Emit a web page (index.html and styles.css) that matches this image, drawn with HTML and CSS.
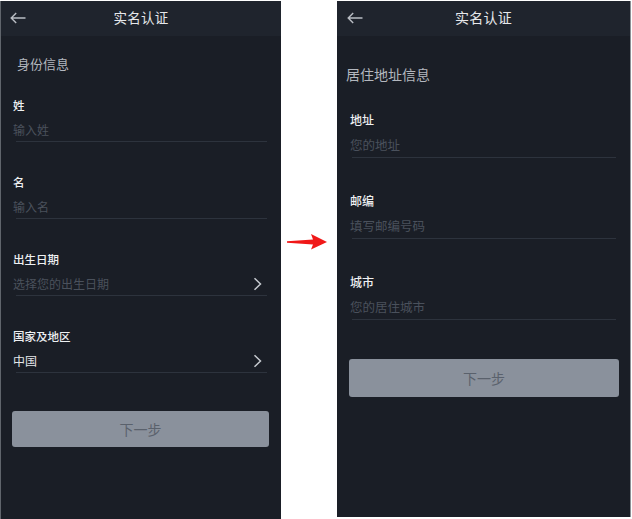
FILE: index.html
```html
<!DOCTYPE html>
<html lang="zh-CN">
<head>
<meta charset="utf-8">
<title>实名认证</title>
<link rel="stylesheet" href="styles.css">
</head>
<body>
<div class="stage">
  <section class="phone phone-left">
    <header class="topbar">
      <span class="back">
        <svg width="16" height="12" viewBox="0 0 16 12"><path d="M15.5 6H1.2M6.2 1L1.2 6l5 5" fill="none" stroke="#b9bdc4" stroke-width="1.4"/></svg>
      </span>
      <span class="title">实名认证</span>
      <span></span>
    </header>
    <h2 class="section">身份信息</h2>
    <div class="fields">
      <div class="field">
        <div class="label">姓</div>
        <div class="value placeholder">输入姓</div>
        <div class="rule"></div>
      </div>
      <div class="field">
        <div class="label">名</div>
        <div class="value placeholder">输入名</div>
        <div class="rule"></div>
      </div>
      <div class="field">
        <div class="label">出生日期</div>
        <div class="value placeholder"><span>选择您的出生日期</span>
          <svg class="chev" width="9" height="14" viewBox="0 0 9 14"><path d="M1.5 1.2l6 5.8-6 5.8" fill="none" stroke="#c6cad0" stroke-width="1.5"/></svg>
        </div>
        <div class="rule"></div>
      </div>
      <div class="field">
        <div class="label">国家及地区</div>
        <div class="value filled"><span>中国</span>
          <svg class="chev" width="9" height="14" viewBox="0 0 9 14"><path d="M1.5 1.2l6 5.8-6 5.8" fill="none" stroke="#c6cad0" stroke-width="1.5"/></svg>
        </div>
        <div class="rule"></div>
      </div>
    </div>
    <button class="next">下一步</button>
  </section>

  <div class="flow">
    <svg width="40" height="20" viewBox="0 0 40 20"><polygon points="0,9.3 26,7.6 24,2 40,10 24,17.5 26,12.6 0,10.7" fill="#f01818"/></svg>
  </div>

  <section class="phone phone-right">
    <header class="topbar">
      <span class="back">
        <svg width="16" height="12" viewBox="0 0 16 12"><path d="M15.5 6H1.2M6.2 1L1.2 6l5 5" fill="none" stroke="#b9bdc4" stroke-width="1.4"/></svg>
      </span>
      <span class="title">实名认证</span>
      <span></span>
    </header>
    <h2 class="section">居住地址信息</h2>
    <div class="fields">
      <div class="field">
        <div class="label">地址</div>
        <div class="value placeholder">您的地址</div>
        <div class="rule"></div>
      </div>
      <div class="field">
        <div class="label">邮编</div>
        <div class="value placeholder">填写邮编号码</div>
        <div class="rule"></div>
      </div>
      <div class="field">
        <div class="label">城市</div>
        <div class="value placeholder">您的居住城市</div>
        <div class="rule"></div>
      </div>
    </div>
    <button class="next">下一步</button>
  </section>
</div>
</body>
</html>
```

FILE: styles.css
```css
* { box-sizing: border-box; }

html, body {
  margin: 0;
  padding: 0;
  background: #ffffff;
}

body {
  font-family: "Noto Sans CJK SC", "Noto Sans", sans-serif;
  width: 632px;
  height: 519px;
  overflow: hidden;
}

.stage {
  display: flex;
  align-items: flex-start;
  padding-top: 1px;
}

.phone {
  background: #1a1e26;
  display: flex;
  flex-direction: column;
}

.phone-left {
  width: 281px;
  height: 518px;
  border-left: 1px solid #60656c;
}

.phone-right {
  width: 294px;
  height: 516px;
  border-right: 1px solid #8c9096;
}

.topbar {
  height: 35px;
  padding-bottom: 3px;
  background: #1f242d;
  display: grid;
  grid-template-columns: 1fr auto 1fr;
  align-items: center;
}

.back {
  display: flex;
  align-items: center;
  padding-left: 9px;
  padding-top: 1px;
}

.phone-right .back { padding-left: 10px; }

.title {
  color: #e6e8eb;
  font-size: 13.5px;
  line-height: 18px;
  letter-spacing: 0.3px;
}

.phone-right .title { font-size: 14px; }

.section {
  margin: 19px 0 0 16px;
  font-weight: normal;
  font-size: 13px;
  line-height: 18px;
  color: #b3b7be;
}

.phone-right .section {
  margin: 28px 0 0 9px;
  font-size: 14px;
  line-height: 20px;
}

.fields {
  display: flex;
  flex-direction: column;
  gap: 32px;
  margin: 24px 14px 0 12px;
}

.phone-right .fields {
  gap: 35px;
  margin: 28px 14px 0 13px;
}

.label {
  font-size: 11.5px;
  line-height: 16px;
  color: #eef0f2;
  font-weight: 500;
}

.phone-right .label { font-size: 12px; }

.value {
  margin-top: 9px;
  font-size: 12px;
  line-height: 16px;
  padding-bottom: 3px;
  display: flex;
  justify-content: space-between;
  align-items: center;
  padding-right: 5px;
}

.phone-right .value {
  margin-top: 8px;
  font-size: 12.5px;
  line-height: 17px;
  padding-bottom: 4px;
}

.placeholder { color: #4a515c; }
.filled { color: #e4e6e9; }

.chev { display: block; }

.rule {
  height: 1px;
  background: #2d333d;
  margin-left: 3px;
}

.phone-right .rule { margin-left: 2px; }

.next {
  margin: 38px 12px 0 11px;
  height: 36px;
  border: none;
  border-radius: 3px;
  background: #8a919c;
  color: #5a616c;
  font-family: "Noto Sans CJK SC", "Noto Sans", sans-serif;
  font-size: 14px;
  padding: 0;
}

.phone-right .next {
  margin: 39px 11px 0 12px;
  height: 38px;
}

.flow {
  width: 56px;
  padding: 231px 0 0 6px;
}

.flow svg { display: block; }
```
